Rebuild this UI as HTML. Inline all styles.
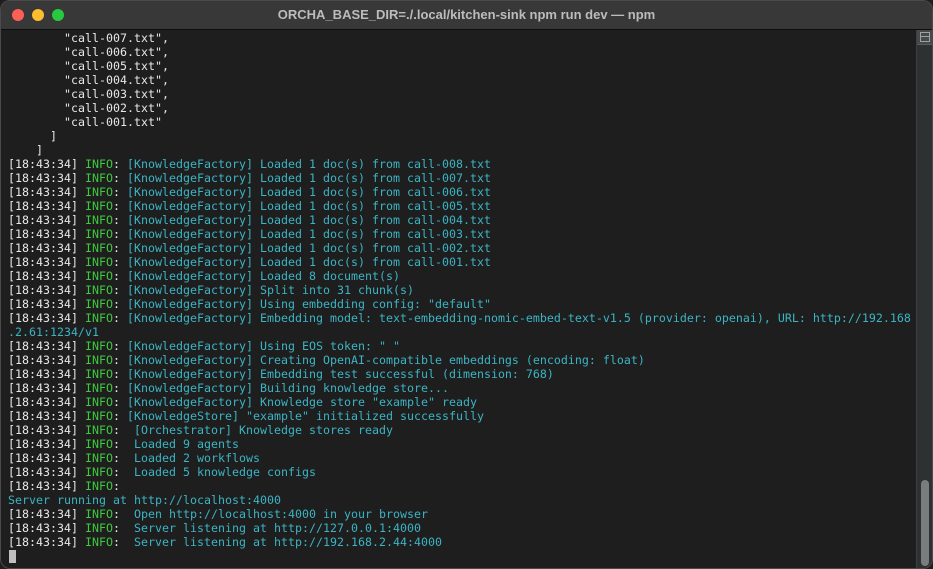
<!DOCTYPE html>
<html><head><meta charset="utf-8"><style>
html,body{margin:0;padding:0;background:#1e1e1e;}
body{width:933px;height:569px;overflow:hidden;position:relative;font-family:"DejaVu Sans Mono","Liberation Mono",monospace;}
.win{position:absolute;left:0;top:0;width:931px;height:567px;border:1px solid #4a4a4a;border-radius:10px;overflow:hidden;background:#1e1e1e;}
.tb{position:absolute;left:0;top:0;width:100%;height:28px;background:#383838;border-bottom:1px solid #0e0e0e;}
.tl{position:absolute;top:8px;width:12px;height:12px;border-radius:50%;}
.title{position:absolute;left:0;right:0;top:6px;text-align:center;color:#bcbcbc;font:bold 13px "Liberation Sans",sans-serif;}
.term{position:absolute;left:7px;top:30px;margin:0;font-size:11.63px;line-height:14px;color:#e8e8e8;white-space:pre;}
.g{color:#3fc93f}.c{color:#3cb4c4}
.sb{position:absolute;left:915px;top:29px;width:16px;height:538px;background:#2e3132;border-left:1px solid #3c3f40;}
.thumb{position:absolute;left:4px;top:450px;width:8px;height:86px;background:#7a7d7d;border-radius:4px;}
.icb{position:absolute;left:0;top:0;width:16px;height:14px;background:#45494a;border-bottom:1px solid #5a5d5e;}
.ic{position:absolute;left:3px;top:2px;width:8px;height:8px;border:1px solid #a0a0a0;}
.ic:after{content:"";position:absolute;left:0;right:0;top:3px;height:1px;background:#a0a0a0;}
.cur{position:absolute;left:8px;top:549px;width:7px;height:13px;background:#bfbfbf;}
</style></head><body><div class="win">
<div class="tb"><div class="tl" style="left:11px;background:#fe5f57"></div><div class="tl" style="left:31px;background:#febc2e"></div><div class="tl" style="left:51px;background:#28c840"></div><div class="title">ORCHA_BASE_DIR=./.local/kitchen-sink npm run dev — npm</div></div>
<pre class="term">        "call-007.txt",
        "call-006.txt",
        "call-005.txt",
        "call-004.txt",
        "call-003.txt",
        "call-002.txt",
        "call-001.txt"
      ]
    ]
[18:43:34] <span class="g">INFO</span>: <span class="c">[KnowledgeFactory] Loaded 1 doc(s) from call-008.txt</span>
[18:43:34] <span class="g">INFO</span>: <span class="c">[KnowledgeFactory] Loaded 1 doc(s) from call-007.txt</span>
[18:43:34] <span class="g">INFO</span>: <span class="c">[KnowledgeFactory] Loaded 1 doc(s) from call-006.txt</span>
[18:43:34] <span class="g">INFO</span>: <span class="c">[KnowledgeFactory] Loaded 1 doc(s) from call-005.txt</span>
[18:43:34] <span class="g">INFO</span>: <span class="c">[KnowledgeFactory] Loaded 1 doc(s) from call-004.txt</span>
[18:43:34] <span class="g">INFO</span>: <span class="c">[KnowledgeFactory] Loaded 1 doc(s) from call-003.txt</span>
[18:43:34] <span class="g">INFO</span>: <span class="c">[KnowledgeFactory] Loaded 1 doc(s) from call-002.txt</span>
[18:43:34] <span class="g">INFO</span>: <span class="c">[KnowledgeFactory] Loaded 1 doc(s) from call-001.txt</span>
[18:43:34] <span class="g">INFO</span>: <span class="c">[KnowledgeFactory] Loaded 8 document(s)</span>
[18:43:34] <span class="g">INFO</span>: <span class="c">[KnowledgeFactory] Split into 31 chunk(s)</span>
[18:43:34] <span class="g">INFO</span>: <span class="c">[KnowledgeFactory] Using embedding config: "default"</span>
[18:43:34] <span class="g">INFO</span>: <span class="c">[KnowledgeFactory] Embedding model: text-embedding-nomic-embed-text-v1.5 (provider: openai), URL: http://192.168</span>
<span class="c">.2.61:1234/v1</span>
[18:43:34] <span class="g">INFO</span>: <span class="c">[KnowledgeFactory] Using EOS token: " "</span>
[18:43:34] <span class="g">INFO</span>: <span class="c">[KnowledgeFactory] Creating OpenAI-compatible embeddings (encoding: float)</span>
[18:43:34] <span class="g">INFO</span>: <span class="c">[KnowledgeFactory] Embedding test successful (dimension: 768)</span>
[18:43:34] <span class="g">INFO</span>: <span class="c">[KnowledgeFactory] Building knowledge store...</span>
[18:43:34] <span class="g">INFO</span>: <span class="c">[KnowledgeFactory] Knowledge store "example" ready</span>
[18:43:34] <span class="g">INFO</span>: <span class="c">[KnowledgeStore] "example" initialized successfully</span>
[18:43:34] <span class="g">INFO</span>:  <span class="c">[Orchestrator] Knowledge stores ready</span>
[18:43:34] <span class="g">INFO</span>:  <span class="c">Loaded 9 agents</span>
[18:43:34] <span class="g">INFO</span>:  <span class="c">Loaded 2 workflows</span>
[18:43:34] <span class="g">INFO</span>:  <span class="c">Loaded 5 knowledge configs</span>
[18:43:34] <span class="g">INFO</span>:
<span class="c">Server running at http://localhost:4000</span>
[18:43:34] <span class="g">INFO</span>:  <span class="c">Open http://localhost:4000 in your browser</span>
[18:43:34] <span class="g">INFO</span>:  <span class="c">Server listening at http://127.0.0.1:4000</span>
[18:43:34] <span class="g">INFO</span>:  <span class="c">Server listening at http://192.168.2.44:4000</span></pre>
<div class="cur"></div>
<div class="sb"><div class="icb"><div class="ic"></div></div><div class="thumb"></div></div>
</div></body></html>
